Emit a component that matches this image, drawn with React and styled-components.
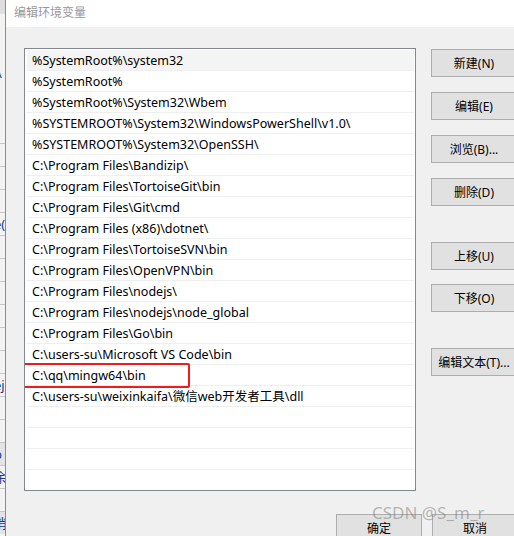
import React from 'react'
import styled, {createGlobalStyle} from 'styled-components'

const GlobalStyle = createGlobalStyle`
  html, body {
    margin: 0;
    padding: 0;
    background: #f0f0f0;
  }
  body {
    font-family: "Noto Sans", "Noto Sans CJK SC", sans-serif;
    font-size: 12px;
    color: #000;
  }
`

const paths = [
    '%SystemRoot%\\system32',
    '%SystemRoot%',
    '%SystemRoot%\\System32\\Wbem',
    '%SYSTEMROOT%\\System32\\WindowsPowerShell\\v1.0\\',
    '%SYSTEMROOT%\\System32\\OpenSSH\\',
    'C:\\Program Files\\Bandizip\\',
    'C:\\Program Files\\TortoiseGit\\bin',
    'C:\\Program Files\\Git\\cmd',
    'C:\\Program Files (x86)\\dotnet\\',
    'C:\\Program Files\\TortoiseSVN\\bin',
    'C:\\Program Files\\OpenVPN\\bin',
    'C:\\Program Files\\nodejs\\',
    'C:\\Program Files\\nodejs\\node_global',
    'C:\\Program Files\\Go\\bin',
    'C:\\users-su\\Microsoft VS Code\\bin',
    'C:\\qq\\mingw64\\bin',
    'C:\\users-su\\weixinkaifa\\微信web开发者工具\\dll',
    '', '', '', '',
]

const sideButtons = [
    {label: '新建(N)', gap: 0},
    {label: '编辑(E)', gap: 15},
    {label: '浏览(B)...', gap: 15},
    {label: '删除(D)', gap: 15},
    {label: '上移(U)', gap: 36},
    {label: '下移(O)', gap: 14},
    {label: '编辑文本(T)...', gap: 36},
]

const backRows = ['', '', '', 'e(', '', '', '', '', '', '', 'ej', '', '', 'b', '余', '', '消']

const App = () => {
    return (
        <Screen>
            <GlobalStyle/>
            <BackWindow>
                <BackTop/>
                <BackSlash>\</BackSlash>
                <BackList>
                    {backRows.map((t, i) => (
                        <BackRow key={i} shaded={i === 13 || i === 16}>{t}</BackRow>
                    ))}
                </BackList>
            </BackWindow>
            <Dialog>
                <TitleBar>
                    <Title>编辑环境变量</Title>
                    <Close>✕</Close>
                </TitleBar>
                <Body>
                    <Main>
                        <ListBox>
                            {paths.map((p, i) => (
                                <Row key={i} selected={i === 0}>
                                    {p}
                                    {i === 15 && <Highlight/>}
                                </Row>
                            ))}
                        </ListBox>
                        <SideColumn>
                            {sideButtons.map(b => (
                                <Button key={b.label} style={{marginTop: b.gap}}>{b.label}</Button>
                            ))}
                        </SideColumn>
                    </Main>
                    <Footer>
                        <Button>确定</Button>
                        <Button>取消</Button>
                    </Footer>
                </Body>
                <Watermark>CSDN @S_m_r</Watermark>
            </Dialog>
        </Screen>
    )
}

const Screen = styled.div`
  width: 514px;
  height: 536px;
  overflow: hidden;
  display: flex;
  background: #f0f0f0;
`

const BackWindow = styled.div`
  width: 5px;
  flex-shrink: 0;
  overflow: hidden;
  background: #f3f3f3;
  border-right: 1px solid #8c8c8c;
  display: flex;
  flex-direction: column;
`

const BackTop = styled.div`
  height: 14px;
  background: #dedede;
`

const BackSlash = styled.div`
  height: 129px;
  padding-top: 50px;
  box-sizing: border-box;
  color: #1a3a8a;
  font-size: 13px;
  margin-left: -3px;
`

const BackList = styled.div`
  display: flex;
  flex-direction: column;
`

const BackRow = styled.div`
  height: 22px;
  line-height: 22px;
  border-top: 1px solid #c8c8c8;
  background: ${p => p.shaded ? '#e4e4e4' : '#f3f3f3'};
  margin-left: -6px;
  font-size: 13px;
  color: #1a3a8a;
  white-space: nowrap;
`

const Dialog = styled.div`
  position: relative;
  flex: 1;
  display: flex;
  flex-direction: column;
`

const TitleBar = styled.div`
  height: 27px;
  flex-shrink: 0;
  background: #fff;
  display: flex;
  align-items: center;
  justify-content: space-between;
  padding-left: 8px;
`

const Title = styled.span`
  color: #999;
  font-size: 12px;
  margin-top: -4px;
`

const Close = styled.span`
  color: #aaa;
  font-size: 11px;
  margin-right: -6px;
  margin-top: 3px;
`

const Body = styled.div`
  padding: 21px 0 0 18px;
  display: flex;
  flex-direction: column;
`

const Main = styled.div`
  display: flex;
  gap: 15px;
`

const ListBox = styled.div`
  width: 390px;
  height: 440px;
  flex-shrink: 0;
  background: #fff;
  border: 1px solid #828790;
  padding-top: 1px;
  box-sizing: content-box;
  overflow: hidden;
`

const Row = styled.div`
  position: relative;
  height: 20px;
  line-height: 22px;
  padding-left: 5px;
  margin: 0 1px 0 2px;
  border-bottom: 1px solid #efefef;
  background: ${p => p.selected ? '#f4f4f4' : 'transparent'};
  white-space: nowrap;
  font-size: 12.5px;
`

const Highlight = styled.span`
  position: absolute;
  left: -8px;
  top: -2px;
  width: 167px;
  height: 21px;
  border: 2px solid #ee1c1c;
  border-radius: 2px;
`

const SideColumn = styled.div`
  display: flex;
  flex-direction: column;
  padding-top: 1px;
`

const Button = styled.div`
  width: 84px;
  height: 26px;
  flex-shrink: 0;
  background: #e1e1e1;
  border: 1px solid #adadad;
  display: flex;
  align-items: center;
  justify-content: center;
  font-size: 12px;
  white-space: nowrap;
`

const Footer = styled.div`
  display: flex;
  gap: 10px;
  margin-top: 23px;
  padding-left: 312px;
`

const Watermark = styled.div`
  position: absolute;
  left: 366px;
  top: 501px;
  font-size: 17px;
  color: rgba(120, 120, 120, 0.5);
  white-space: nowrap;
  pointer-events: none;
`

export default App
